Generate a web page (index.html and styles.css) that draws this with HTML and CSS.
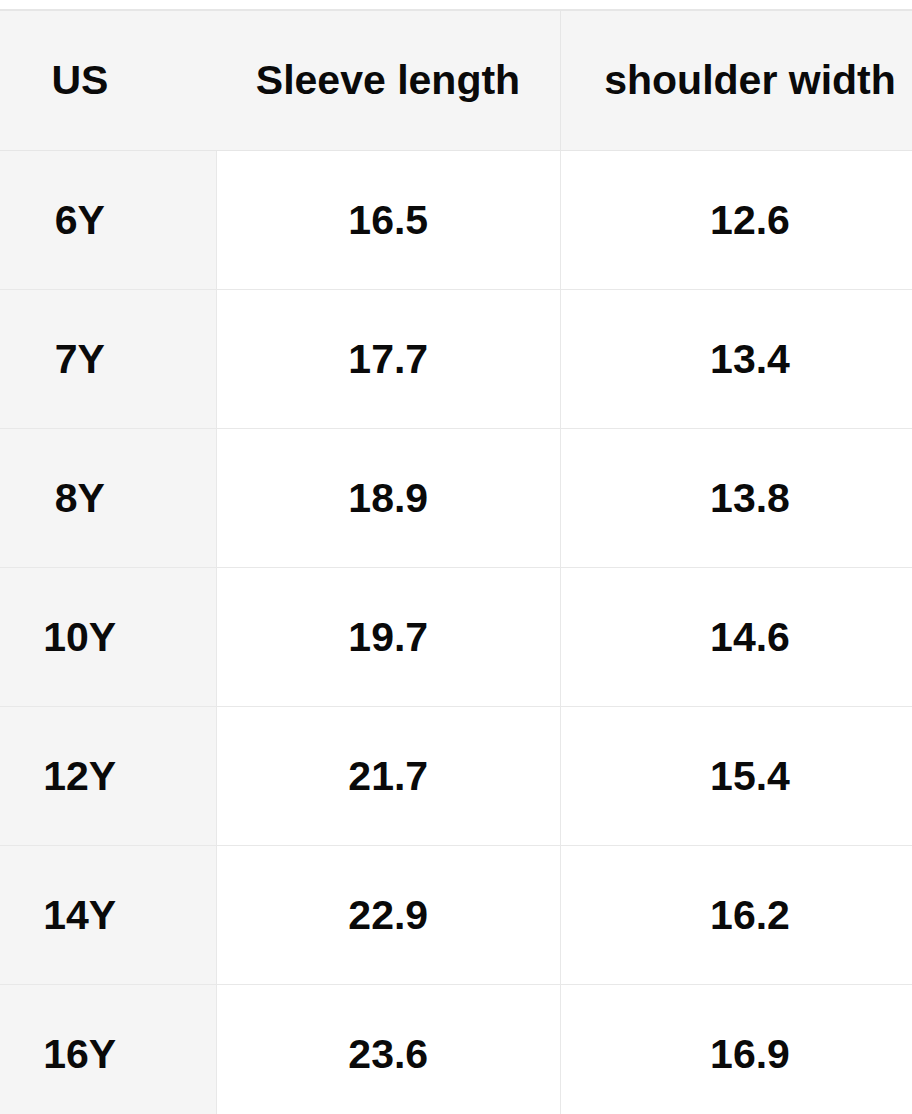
FILE: index.html
```html
<!DOCTYPE html>
<html>
<head>
<meta charset="utf-8">
<link rel="stylesheet" href="styles.css">
</head>
<body>
<div class="frame">
  <table class="size-table">
    <thead>
      <tr>
        <th class="c-us">US</th>
        <th class="c-sleeve">Sleeve length</th>
        <th class="c-shoulder">shoulder width</th>
      </tr>
    </thead>
    <tbody>
      <tr><th class="c-us">6Y</th><td>16.5</td><td>12.6</td></tr>
      <tr><th class="c-us">7Y</th><td>17.7</td><td>13.4</td></tr>
      <tr><th class="c-us">8Y</th><td>18.9</td><td>13.8</td></tr>
      <tr><th class="c-us">10Y</th><td>19.7</td><td>14.6</td></tr>
      <tr><th class="c-us">12Y</th><td>21.7</td><td>15.4</td></tr>
      <tr><th class="c-us">14Y</th><td>22.9</td><td>16.2</td></tr>
      <tr><th class="c-us">16Y</th><td>23.6</td><td>16.9</td></tr>
    </tbody>
  </table>
</div>
</body>
</html>
```

FILE: styles.css
```css
html, body {
  margin: 0;
  padding: 0;
  background: #ffffff;
}

.frame {
  width: 912px;
  height: 1114px;
  overflow: hidden;
  padding-top: 9px;
  box-sizing: border-box;
}

.size-table {
  margin-left: -56px;
  border-collapse: collapse;
  table-layout: fixed;
  width: 995px;
  font-family: "Liberation Sans", Arial, sans-serif;
  font-weight: 700;
  font-size: 41px;
  color: #0a0a0a;
  border-top: 2px solid #e6e6e6;
}

.size-table th,
.size-table td {
  text-align: center;
  vertical-align: middle;
  height: 138px;
  padding: 0;
  border-bottom: 1px solid #e8e8e8;
  font-weight: 700;
}

.size-table thead th {
  background: #f5f5f5;
  height: 139px;
  border-bottom: 1px solid #e6e6e6;
}

.c-us {
  width: 272px;
}

.c-sleeve {
  width: 344px;
}

.size-table thead .c-sleeve {
  border-right: 1px solid #e6e6e6;
}

.size-table tbody th {
  background: #f5f5f5;
  border-right: 1px solid #e8e8e8;
}

.size-table tbody td {
  background: #ffffff;
}

.size-table tbody td + td {
  border-left: 1px solid #e8e8e8;
}
```
